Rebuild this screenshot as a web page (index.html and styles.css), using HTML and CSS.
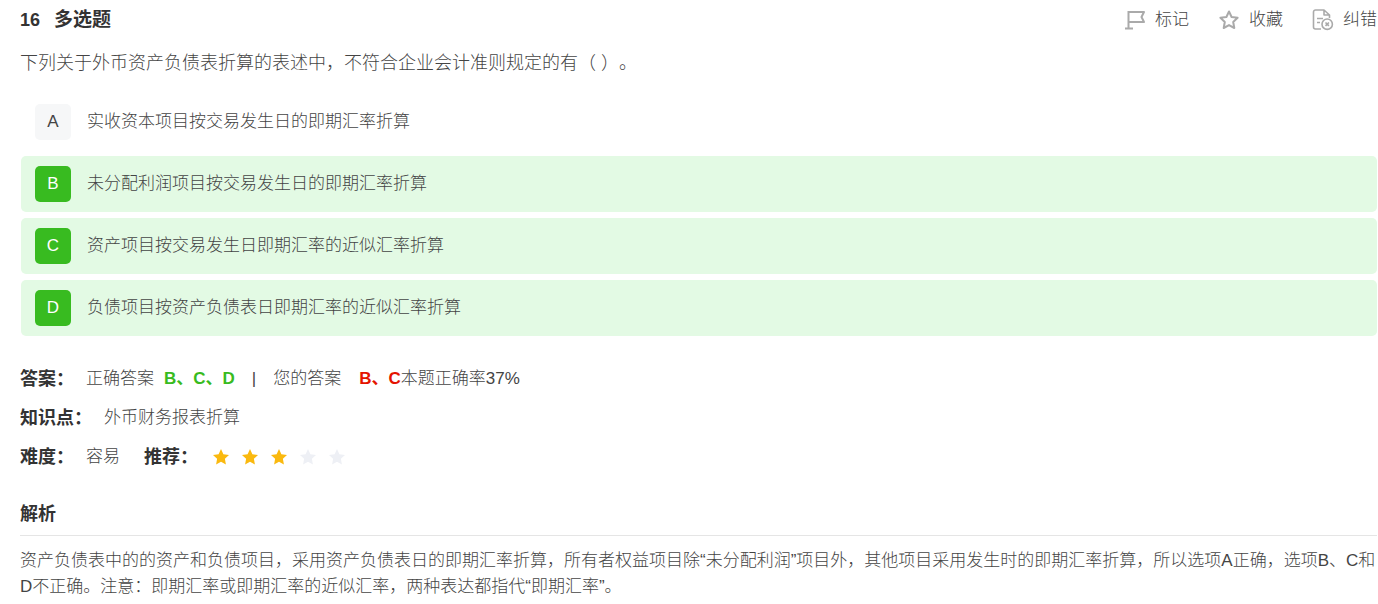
FILE: index.html
```html
<!DOCTYPE html>
<html lang="zh-CN">
<head>
<meta charset="utf-8">
<title>多选题</title>
<link rel="stylesheet" href="styles.css">
</head>
<body>
<main class="question">
  <header class="question-header">
    <h1 class="title"><span class="number">16</span><span>多选题</span></h1>
    <div class="actions">
      <button class="action" type="button">
        <svg class="action-icon" viewBox="0 0 20 20" aria-hidden="true"><path d="M3.500 1v17.500M0 18.500h8M3.500 2H19l-2.500 5 2.500 5H3.500"/></svg>
        <span>标记</span>
      </button>
      <button class="action" type="button">
        <svg class="action-icon" viewBox="0 0 20 20" aria-hidden="true"><path d="M10 1.500l2.600 5.500 6 .8-4.400 4.200 1.100 6L10 15.100 4.700 18l1.100-6L1.400 7.800l6-.8z"/></svg>
        <span>收藏</span>
      </button>
      <button class="action" type="button">
        <svg class="action-icon thin" viewBox="0 0 20 20" aria-hidden="true"><path d="M8 19H2.500A2 2 0 0 1 .5 17V2a2 2 0 0 1 2-2H11l5.500 5V8M11 0V5h5.500M4 8.500h6M4 12.500h3"/><circle cx="14.200" cy="14.200" r="5.200"/><path d="M12.500 12.500l3.400 3.400M15.900 12.500l-3.400 3.400"/></svg>
        <span>纠错</span>
      </button>
    </div>
  </header>

  <p class="stem">下列关于外币资产负债表折算的表述中，不符合企业会计准则规定的有（ ）。</p>

  <div class="options">
    <button class="option" type="button"><span class="badge">A</span><span>实收资本项目按交易发生日的即期汇率折算</span></button>
    <button class="option correct" type="button"><span class="badge">B</span><span>未分配利润项目按交易发生日的即期汇率折算</span></button>
    <button class="option correct" type="button"><span class="badge">C</span><span>资产项目按交易发生日即期汇率的近似汇率折算</span></button>
    <button class="option correct" type="button"><span class="badge">D</span><span>负债项目按资产负债表日即期汇率的近似汇率折算</span></button>
  </div>

  <section class="result">
    <div class="result-row">
      <h2 class="label">答案：</h2>
      <span>正确答案</span><strong class="right">B、C、D</strong><span class="divider">|</span><span>您的答案</span><strong class="wrong">B、C</strong><span>本题正确率37%</span>
    </div>
    <div class="result-row">
      <h2 class="label">知识点：</h2>
      <span>外币财务报表折算</span>
    </div>
    <div class="result-row">
      <h2 class="label">难度：</h2>
      <span>容易</span>
      <h2 class="label recommend">推荐：</h2>
      <div class="stars" role="img" aria-label="3 / 5">
        <svg class="star on" viewBox="0 0 16 16"><path d="M8 0l2.400 5.200 5.600.7-4.100 3.900 1 5.700L8 12.700l-4.900 2.800 1-5.700L0 5.900l5.600-.7z"/></svg>
        <svg class="star on" viewBox="0 0 16 16"><path d="M8 0l2.400 5.200 5.600.7-4.100 3.900 1 5.700L8 12.700l-4.900 2.800 1-5.700L0 5.900l5.600-.7z"/></svg>
        <svg class="star on" viewBox="0 0 16 16"><path d="M8 0l2.400 5.200 5.600.7-4.100 3.900 1 5.700L8 12.700l-4.900 2.800 1-5.700L0 5.900l5.600-.7z"/></svg>
        <svg class="star" viewBox="0 0 16 16"><path d="M8 0l2.400 5.200 5.600.7-4.100 3.900 1 5.700L8 12.700l-4.900 2.800 1-5.700L0 5.900l5.600-.7z"/></svg>
        <svg class="star" viewBox="0 0 16 16"><path d="M8 0l2.400 5.200 5.600.7-4.100 3.900 1 5.700L8 12.700l-4.900 2.800 1-5.700L0 5.900l5.600-.7z"/></svg>
      </div>
    </div>
  </section>

  <section class="analysis">
    <h2 class="analysis-title">解析</h2>
    <p class="analysis-text">资产负债表中的的资产和负债项目，采用资产负债表日的即期汇率折算，所有者权益项目除“未分配利润”项目外，其他项目采用发生时的即期汇率折算，所以选项A正确，选项B、C和D不正确。注意：即期汇率或即期汇率的近似汇率，两种表达都指代“即期汇率”。</p>
  </section>
</main>
</body>
</html>
```
FILE: styles.css
```css
* {
  box-sizing: border-box;
}

body {
  margin: 0;
  background: #fff;
  color: #444;
  font: 300 17px/26px "Liberation Sans", "Noto Sans CJK SC", sans-serif;
  text-spacing-trim: space-all;
}

h1,
h2,
p {
  margin: 0;
}

button {
  padding: 0;
  border: 0;
  background: none;
  color: inherit;
  font: inherit;
  text-align: left;
  cursor: pointer;
}

.question {
  padding: 7px 1px 0 20px;
}

.question-header {
  display: flex;
  justify-content: space-between;
  align-items: center;
}

.title {
  display: flex;
  gap: 14px;
  color: #333;
  font-size: 19px;
  font-weight: 700;
}

.number {
  font-size: 18px;
}

.actions {
  display: flex;
  gap: 30px;
}

.action {
  display: flex;
  align-items: center;
  gap: 10px;
}

.action-icon {
  width: 20px;
  height: 20px;
  overflow: visible;
  fill: none;
  stroke: #aaa;
  stroke-width: 2;
  stroke-linejoin: round;
}

.thin {
  stroke-width: 1.6;
}

.stem {
  margin-top: 17px;
  font-size: 18px;
}

.options {
  display: flex;
  flex-direction: column;
  gap: 6px;
  margin-top: 18px;
  padding-left: 1px;
}

.option {
  display: flex;
  align-items: center;
  gap: 16px;
  padding: 10px 14px;
  border-radius: 5px;
}

.badge {
  width: 36px;
  flex: none;
  border-radius: 5px;
  background: #f6f7f8;
  line-height: 36px;
  text-align: center;
}

.correct {
  background: #e3fae4;
}

.correct .badge {
  background: #38bb20;
  color: #fff;
}

.result {
  display: flex;
  flex-direction: column;
  gap: 13px;
  margin-top: 30px;
}

.result-row {
  display: flex;
  align-items: center;
}

.label,
.analysis-title {
  color: #333;
  font-size: 18px;
  font-weight: 700;
}

.label {
  margin-right: 12px;
}

.right {
  margin-left: 10px;
  color: #38bb20;
  font-weight: 700;
}

.divider {
  margin: 0 17px;
}

.wrong {
  margin-left: 18px;
  color: #e41400;
  font-weight: 700;
}

.recommend {
  margin-left: 24px;
}

.stars {
  display: flex;
  gap: 13px;
  padding-left: 3px;
}

.star {
  width: 16px;
  height: 16px;
  fill: #eef0f5;
}

.star.on {
  fill: #fab90f;
}

.analysis {
  margin-top: 31px;
}

.analysis-title {
  padding-bottom: 8px;
  border-bottom: 1px solid #e5e5e5;
}

.analysis-text {
  margin-top: 12px;
}
```
